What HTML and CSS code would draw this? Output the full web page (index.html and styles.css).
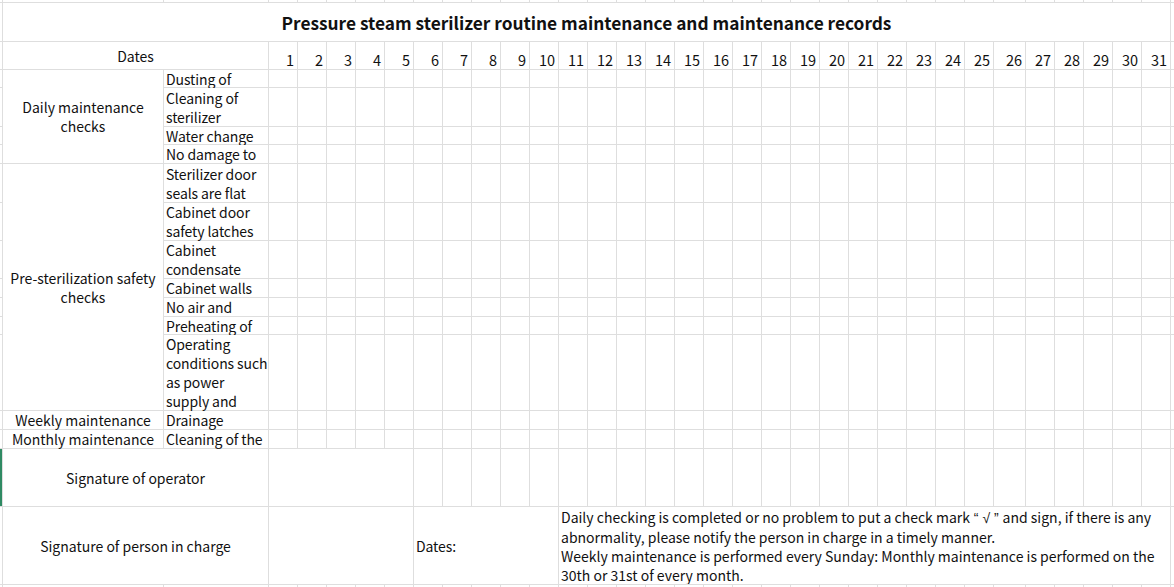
FILE: index.html
```html
<!DOCTYPE html>
<html>
<head>
<meta charset="utf-8">
<link rel="stylesheet" href="styles.css">
</head>
<body>
<div class="sheet">
<!-- row 0 -->
<div></div><div></div><div></div>
<div></div><div></div><div></div><div></div><div></div><div></div><div></div><div></div>
<div></div><div></div><div></div><div></div><div></div><div></div><div></div><div></div>
<div></div><div></div><div></div><div></div><div></div><div></div><div></div><div></div>
<div></div><div></div><div></div><div></div><div></div><div></div><div></div><div></div>
<!-- title -->
<div></div><div class="title"><span>Pressure steam sterilizer routine maintenance and maintenance records</span></div><div></div>
<!-- dates header -->
<div></div><div class="hdr"><span>Dates</span></div>
<div class="num">1</div><div class="num">2</div><div class="num">3</div><div class="num">4</div><div class="num">5</div><div class="num">6</div><div class="num">7</div><div class="num">8</div>
<div class="num">9</div><div class="num">10</div><div class="num">11</div><div class="num">12</div><div class="num">13</div><div class="num">14</div><div class="num">15</div><div class="num">16</div>
<div class="num">17</div><div class="num">18</div><div class="num">19</div><div class="num">20</div><div class="num">21</div><div class="num">22</div><div class="num">23</div><div class="num">24</div>
<div class="num">25</div><div class="num">26</div><div class="num">27</div><div class="num">28</div><div class="num">29</div><div class="num">30</div><div class="num">31</div>
<div></div>
<!-- r1 -->
<div></div><div class="grp g4"><span>Daily maintenance<br>checks</span></div><div class="item"><span>Dusting of</span></div>
<div></div><div></div><div></div><div></div><div></div><div></div><div></div><div></div>
<div></div><div></div><div></div><div></div><div></div><div></div><div></div><div></div>
<div></div><div></div><div></div><div></div><div></div><div></div><div></div><div></div>
<div></div><div></div><div></div><div></div><div></div><div></div><div></div><div></div>
<!-- r2 -->
<div></div><div class="item"><span>Cleaning of<br>sterilizer</span></div>
<div></div><div></div><div></div><div></div><div></div><div></div><div></div><div></div>
<div></div><div></div><div></div><div></div><div></div><div></div><div></div><div></div>
<div></div><div></div><div></div><div></div><div></div><div></div><div></div><div></div>
<div></div><div></div><div></div><div></div><div></div><div></div><div></div><div></div>
<!-- r3 -->
<div></div><div class="item"><span>Water change</span></div>
<div></div><div></div><div></div><div></div><div></div><div></div><div></div><div></div>
<div></div><div></div><div></div><div></div><div></div><div></div><div></div><div></div>
<div></div><div></div><div></div><div></div><div></div><div></div><div></div><div></div>
<div></div><div></div><div></div><div></div><div></div><div></div><div></div><div></div>
<!-- r4 -->
<div></div><div class="item"><span>No damage to</span></div>
<div></div><div></div><div></div><div></div><div></div><div></div><div></div><div></div>
<div></div><div></div><div></div><div></div><div></div><div></div><div></div><div></div>
<div></div><div></div><div></div><div></div><div></div><div></div><div></div><div></div>
<div></div><div></div><div></div><div></div><div></div><div></div><div></div><div></div>
<!-- r5 -->
<div></div><div class="grp g7"><span>Pre-sterilization safety<br>checks</span></div><div class="item"><span>Sterilizer door<br>seals are flat</span></div>
<div></div><div></div><div></div><div></div><div></div><div></div><div></div><div></div>
<div></div><div></div><div></div><div></div><div></div><div></div><div></div><div></div>
<div></div><div></div><div></div><div></div><div></div><div></div><div></div><div></div>
<div></div><div></div><div></div><div></div><div></div><div></div><div></div><div></div>
<!-- r6 -->
<div></div><div class="item"><span>Cabinet door<br>safety latches</span></div>
<div></div><div></div><div></div><div></div><div></div><div></div><div></div><div></div>
<div></div><div></div><div></div><div></div><div></div><div></div><div></div><div></div>
<div></div><div></div><div></div><div></div><div></div><div></div><div></div><div></div>
<div></div><div></div><div></div><div></div><div></div><div></div><div></div><div></div>
<!-- r7 -->
<div></div><div class="item"><span>Cabinet<br>condensate</span></div>
<div></div><div></div><div></div><div></div><div></div><div></div><div></div><div></div>
<div></div><div></div><div></div><div></div><div></div><div></div><div></div><div></div>
<div></div><div></div><div></div><div></div><div></div><div></div><div></div><div></div>
<div></div><div></div><div></div><div></div><div></div><div></div><div></div><div></div>
<!-- r8 -->
<div></div><div class="item"><span>Cabinet walls</span></div>
<div></div><div></div><div></div><div></div><div></div><div></div><div></div><div></div>
<div></div><div></div><div></div><div></div><div></div><div></div><div></div><div></div>
<div></div><div></div><div></div><div></div><div></div><div></div><div></div><div></div>
<div></div><div></div><div></div><div></div><div></div><div></div><div></div><div></div>
<!-- r9 -->
<div></div><div class="item"><span>No air and</span></div>
<div></div><div></div><div></div><div></div><div></div><div></div><div></div><div></div>
<div></div><div></div><div></div><div></div><div></div><div></div><div></div><div></div>
<div></div><div></div><div></div><div></div><div></div><div></div><div></div><div></div>
<div></div><div></div><div></div><div></div><div></div><div></div><div></div><div></div>
<!-- r10 -->
<div></div><div class="item"><span>Preheating of</span></div>
<div></div><div></div><div></div><div></div><div></div><div></div><div></div><div></div>
<div></div><div></div><div></div><div></div><div></div><div></div><div></div><div></div>
<div></div><div></div><div></div><div></div><div></div><div></div><div></div><div></div>
<div></div><div></div><div></div><div></div><div></div><div></div><div></div><div></div>
<!-- r11 -->
<div></div><div class="item"><span>Operating<br>conditions such<br>as power<br>supply and</span></div>
<div></div><div></div><div></div><div></div><div></div><div></div><div></div><div></div>
<div></div><div></div><div></div><div></div><div></div><div></div><div></div><div></div>
<div></div><div></div><div></div><div></div><div></div><div></div><div></div><div></div>
<div></div><div></div><div></div><div></div><div></div><div></div><div></div><div></div>
<!-- r12 -->
<div></div><div class="grp"><span>Weekly maintenance</span></div><div class="item"><span>Drainage</span></div>
<div></div><div></div><div></div><div></div><div></div><div></div><div></div><div></div>
<div></div><div></div><div></div><div></div><div></div><div></div><div></div><div></div>
<div></div><div></div><div></div><div></div><div></div><div></div><div></div><div></div>
<div></div><div></div><div></div><div></div><div></div><div></div><div></div><div></div>
<!-- r13 -->
<div></div><div class="grp"><span>Monthly maintenance</span></div><div class="item"><span>Cleaning of the</span></div>
<div></div><div></div><div></div><div></div><div></div><div></div><div></div><div></div>
<div></div><div></div><div></div><div></div><div></div><div></div><div></div><div></div>
<div></div><div></div><div></div><div></div><div></div><div></div><div></div><div></div>
<div></div><div></div><div></div><div></div><div></div><div></div><div></div><div></div>
<!-- r14 operator -->
<div class="sel"></div><div class="hdr"><span>Signature of operator</span></div><div class="m5"></div>
<div></div><div></div><div></div><div></div><div></div><div></div><div></div><div></div>
<div></div><div></div><div></div><div></div><div></div><div></div><div></div><div></div>
<div></div><div></div><div></div><div></div><div></div><div></div><div></div><div></div>
<div></div><div></div><div></div>
<!-- r15 person in charge -->
<div></div><div class="hdr"><span>Signature of person in charge</span></div><div class="m5"></div>
<div class="m5 item"><span>Dates:</span></div>
<div class="notes"><span>Daily checking is completed or no problem to put a check mark<span class="latin"> “ √ ” </span>and sign, if there is any<br>abnormality, please notify the person in charge in a timely manner.<br>Weekly maintenance is performed every Sunday: Monthly maintenance is performed on the<br>30th or 31st of every month.</span></div>
<div></div>
<!-- bottom -->
<div></div><div></div><div></div>
<div></div><div></div><div></div><div></div><div></div><div></div><div></div><div></div>
<div></div><div></div><div></div><div></div><div></div><div></div><div></div><div></div>
<div></div><div></div><div></div><div></div><div></div><div></div><div></div><div></div>
<div></div><div></div><div></div><div></div><div></div><div></div><div></div><div></div>
</div>
</body>
</html>
```

FILE: styles.css
```css
html, body {
  margin: 0;
  padding: 0;
  background: #fff;
}

.sheet {
  display: grid;
  grid-template-columns: 2px 160px 104px repeat(25, 28px) 31px repeat(5, 28px) 3px;
  grid-template-rows: 2px 38px 27px 17px 38px 17px 18px 38px 37px 37px 18px 18px 17px 75px 18px 18px 57px 77px 2px;
  gap: 1px;
  width: 1174px;
  height: 587px;
  background: #dedede;
  overflow: hidden;
  font-family: "Noto Sans CJK SC", "Liberation Sans", sans-serif;
  font-size: 14px;
  line-height: 19px;
  color: #111;
}

.sheet > div {
  background: #fff;
  overflow: hidden;
  white-space: nowrap;
  min-width: 0;
  min-height: 0;
}

.title {
  grid-column: span 33;
  display: flex;
  align-items: center;
  justify-content: center;
  font-weight: bold;
  font-size: 17.3px;
  padding-top: 1px;
}

.hdr {
  grid-column: span 2;
  display: flex;
  align-items: center;
  justify-content: center;
  padding-top: 1px;
}

.num {
  display: flex;
  align-items: flex-end;
  justify-content: flex-end;
  padding-right: 3px;
  line-height: 19px;
  font-size: 14.5px;
}

.sheet > .grp {
  display: flex;
  align-items: center;
  justify-content: center;
  text-align: center;
  padding-top: 1px;
  overflow: visible;
}

.g4 { grid-row: span 4; }
.g7 { grid-row: span 7; }

.sheet > .item {
  display: flex;
  align-items: center;
  padding-left: 2px;
  padding-top: 1px;
  overflow: visible;
  letter-spacing: -0.1px;
}

.m5 { grid-column: span 5; }

.notes {
  grid-column: span 21;
  display: flex;
  align-items: center;
  padding-left: 2px;
  padding-top: 2px;
}

.latin {
  font-family: "Liberation Sans", sans-serif;
}

.sheet > .sel {
  background: #2f8a63;
}
```
